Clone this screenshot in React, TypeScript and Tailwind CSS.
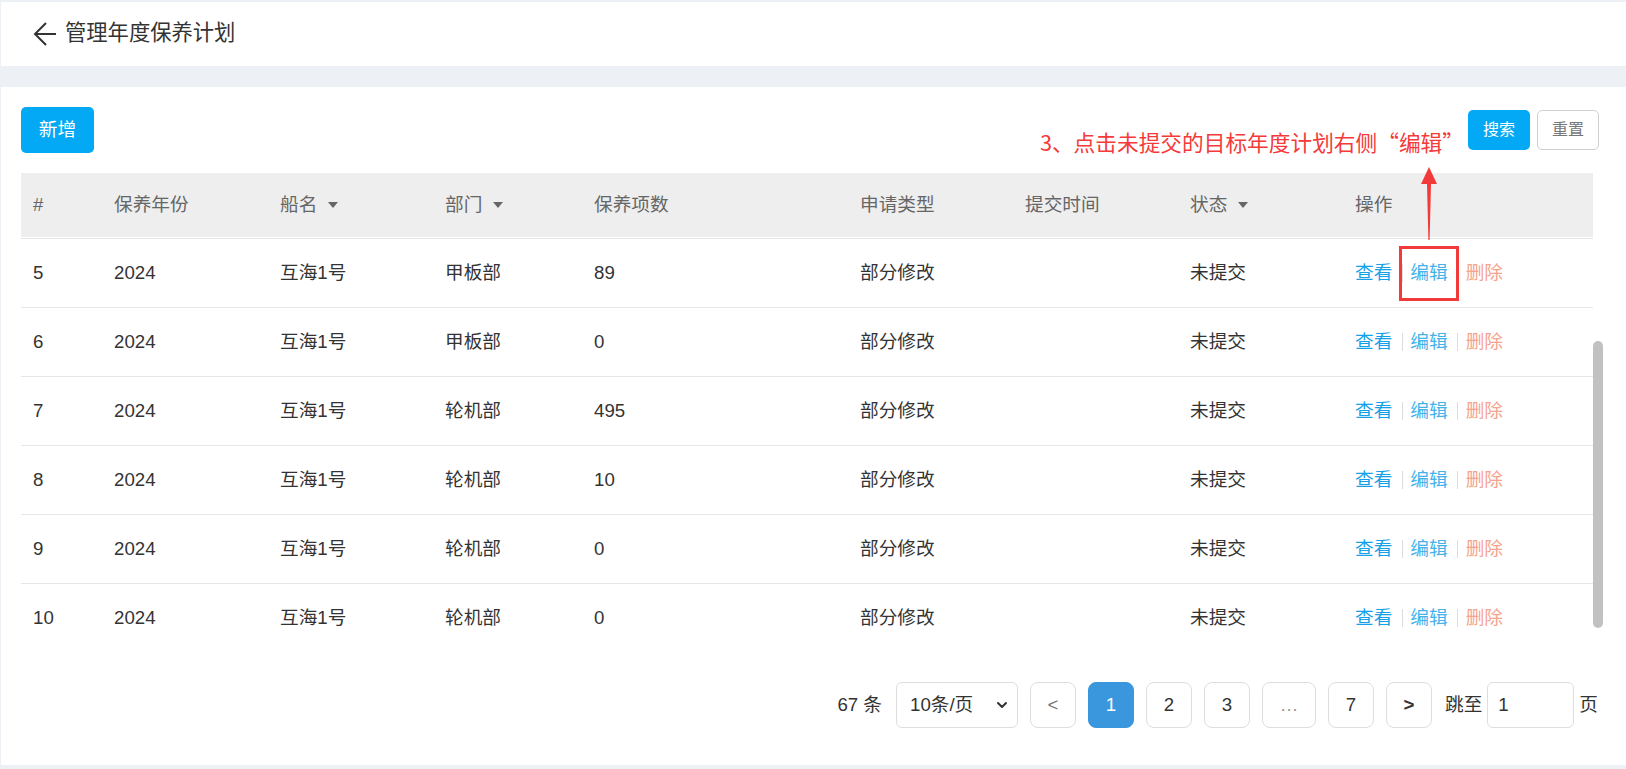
import { ChevronDown } from 'lucide-react';

const columns = [
    { key: 'no', title: '#', width: 81 },
    { key: 'year', title: '保养年份', width: 166 },
    { key: 'ship', title: '船名', width: 165, sort: true },
    { key: 'dept', title: '部门', width: 149, sort: true },
    { key: 'items', title: '保养项数', width: 266 },
    { key: 'type', title: '申请类型', width: 165 },
    { key: 'time', title: '提交时间', width: 165 },
    { key: 'status', title: '状态', width: 165, sort: true },
    { key: 'ops', title: '操作', width: 250 },
];

// rows 1-4 are scrolled out of view in this state
const plans = [
    { no: 5, dept: '甲板部', items: 89, status: '未提交', time: '' },
    { no: 6, dept: '甲板部', items: 0, status: '未提交', time: '' },
    { no: 7, dept: '轮机部', items: 495, status: '未提交', time: '' },
    { no: 8, dept: '轮机部', items: 10, status: '未提交', time: '' },
    { no: 9, dept: '轮机部', items: 0, status: '未提交', time: '' },
    { no: 10, dept: '轮机部', items: 0, status: '未提交', time: '' },
];

function Caret() {
    return (
        <svg width="10" height="6" viewBox="0 0 10 6" className="ml-[11px]">
            <path d="M0 0h10L5 6z" fill="#666" />
        </svg>
    );
}

function PageBtn({ children, active, wide }: { children: React.ReactNode; active?: boolean; wide?: boolean }) {
    return (
        <div
            className={
                'flex h-[46px] items-center justify-center rounded-lg border ' +
                (wide ? 'w-[54px] ' : 'w-[46px] ') +
                (active ? 'border-[#3a97dd] bg-[#3a97dd] text-white' : 'border-[#dedede] bg-white')
            }
        >
            {children}
        </div>
    );
}

export default function App() {
    return (
        <div className="min-h-screen bg-[#edf0f5] pt-[2px] pl-px font-['Liberation_Sans','Noto_Sans_CJK_SC',sans-serif] text-[#333]">
            {/* page title */}
            <div className="flex h-[64px] items-center bg-white pl-8">
                <svg width="24" height="26" viewBox="0 0 24 26" fill="none" stroke="#333" strokeWidth="2">
                    <path d="M23 13H2M13 2 2 13l11 11" />
                </svg>
                <span className="ml-[8px] text-[21.3px]">管理年度保养计划</span>
            </div>

            <div className="mt-[21px] h-[678px] bg-white pt-5 pl-5 pr-6">
                {/* toolbar */}
                <div className="flex h-[46px] items-start justify-between">
                    <button className="h-[46px] w-[73px] rounded-[5px] bg-[#03a9f4] text-[18.67px] text-white">新增</button>
                    <div className="mr-[3px] flex items-start">
                        <span className="mt-[20px] mr-1 font-['Noto_Sans_CJK_SC',sans-serif] text-[21.7px] leading-[30px] text-[#f43a3a]">
                            3、点击未提交的目标年度计划右侧“编辑”
                        </span>
                        <button className="mt-[3px] h-[40px] w-[62px] rounded-[5px] bg-[#03a9f4] text-[16px] text-white">搜索</button>
                        <button className="mt-[3px] ml-[7px] h-[40px] w-[62px] rounded-[5px] border border-[#d0d0d0] bg-white text-[16px] text-[#777]">重置</button>
                    </div>
                </div>

                {/* table */}
                <div className="relative mt-5">
                    <div className="h-[467px] overflow-hidden">
                        <table className="w-[1572px] table-fixed border-separate border-spacing-0 text-[18.67px]">
                            <colgroup>
                                {columns.map((c) => (
                                    <col key={c.key} style={{ width: c.width }} />
                                ))}
                            </colgroup>
                            <thead>
                                <tr>
                                    {columns.map((c) => (
                                        <th key={c.key} className="h-[66px] bg-white p-0 text-left font-normal">
                                            <div className="flex h-[64px] items-center bg-[#eeeeee] pl-3 text-[#666]">
                                                {c.title}
                                                {c.sort && <Caret />}
                                            </div>
                                            <div className="h-px bg-white" />
                                            <div className="h-px bg-[#e3e3e3]" />
                                        </th>
                                    ))}
                                </tr>
                            </thead>
                            <tbody>
                                {plans.map((p) => (
                                    <tr key={p.no}>
                                        <td className="h-[69px] border-b border-[#e6e6e6] pl-3">{p.no}</td>
                                        <td className="border-b border-[#e6e6e6] pl-3">2024</td>
                                        <td className="border-b border-[#e6e6e6] pl-3">互海1号</td>
                                        <td className="border-b border-[#e6e6e6] pl-3">{p.dept}</td>
                                        <td className="border-b border-[#e6e6e6] pl-3">{p.items}</td>
                                        <td className="border-b border-[#e6e6e6] pl-3">部分修改</td>
                                        <td className="border-b border-[#e6e6e6] pl-3">{p.time}</td>
                                        <td className="border-b border-[#e6e6e6] pl-3">{p.status}</td>
                                        <td className="border-b border-[#e6e6e6] pl-3">
                                            <div className="flex items-center">
                                                <span className="text-[#16a0e8]">查看</span>
                                                <span className="ml-[10px] mr-[7px] h-[18px] w-px bg-[#dddddd]" />
                                                <span className="text-[#45b2ea]">编辑</span>
                                                <span className="ml-[9px] mr-[8px] h-[18px] w-px bg-[#dddddd]" />
                                                <span className="text-[#f6a38d]">删除</span>
                                            </div>
                                        </td>
                                    </tr>
                                ))}
                            </tbody>
                        </table>
                    </div>

                    {/* scrollbar thumb */}
                    <div className="absolute top-[168px] left-[1572px] h-[287px] w-[10px] rounded-full bg-[#c1c1c1]" />

                    {/* annotation: arrow + highlight box */}
                    <svg width="16" height="74" viewBox="0 0 16 74" className="absolute top-[-6px] left-[1400px]">
                        <path d="M8 0 16 17H0z" fill="#f33a3a" />
                        <path d="M6 17h4l-1.4 56h-1.2z" fill="#f33a3a" />
                    </svg>
                    <div className="absolute top-[73px] left-[1378px] h-[55px] w-[60px] border-[3px] border-[#f33a3a]" />
                </div>

                {/* pagination */}
                <div className="mt-[42px] mr-1 flex items-center justify-end text-[18.67px] text-[#333]">
                    <span>67 条</span>
                    <div className="ml-[14px] flex h-[46px] w-[122px] items-center justify-between rounded-md border border-[#dedede] pr-[7px] pl-[13px]">
                        <span>10条/页</span>
                        <ChevronDown size={16} strokeWidth={3} />
                    </div>
                    <div className="ml-3 flex items-center gap-3">
                        <PageBtn><span className="text-[#777]">&lt;</span></PageBtn>
                        <PageBtn active>1</PageBtn>
                        <PageBtn>2</PageBtn>
                        <PageBtn>3</PageBtn>
                        <PageBtn wide><span className="text-[#999]">…</span></PageBtn>
                        <PageBtn>7</PageBtn>
                        <PageBtn><span className="font-bold">&gt;</span></PageBtn>
                    </div>
                    <span className="ml-[13px]">跳至</span>
                    <div className="ml-[5px] flex h-[46px] w-[87px] items-center rounded-md border border-[#dedede] pl-[10px]">1</div>
                    <span className="ml-[5px]">页</span>
                </div>
            </div>
        </div>
    );
}
